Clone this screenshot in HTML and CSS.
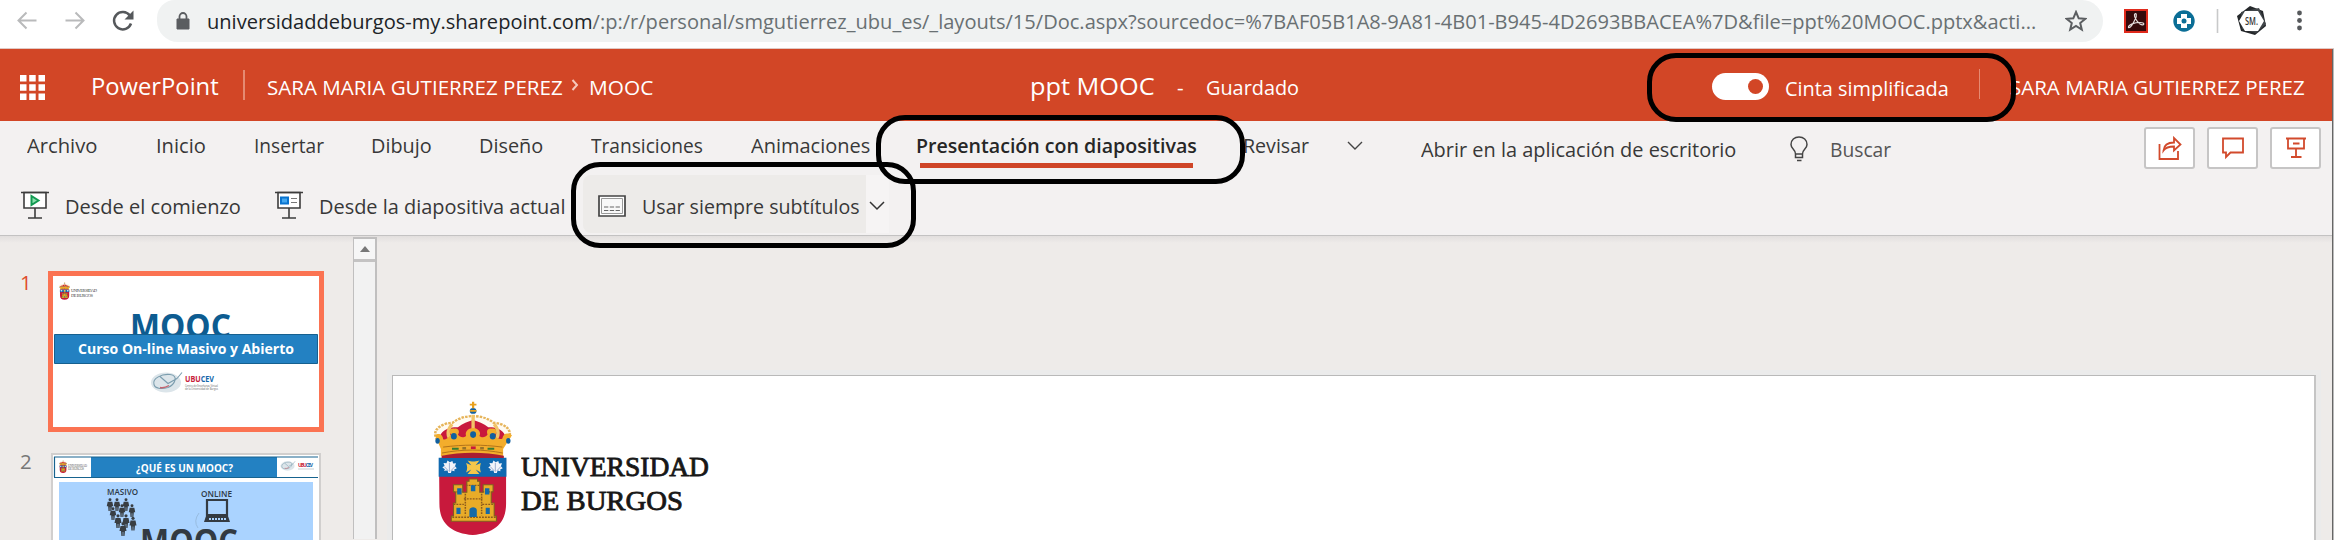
FILE: index.html
```html
<!DOCTYPE html>
<html lang="es">
<head>
<meta charset="utf-8">
<title>ppt MOOC - PowerPoint</title>
<link rel="stylesheet" href="styles.css">
</head>
<body>
<svg class="defs" width="0" height="0">
  <symbol id="crest" viewBox="22 18 216 410" preserveAspectRatio="none">
    <path d="M41 195H222V330C222 390 190 420 132 425C74 420 42 390 42 330Z" fill="#c8193c"/>
    <path d="M40 190H223V248H40Z" fill="#1069b0"/>
    <path d="M50 150C10 118 38 86 78 84C96 68 116 64 133 64C150 64 170 68 188 84C226 86 252 118 212 150Z" fill="#fffaf0" stroke="#e6b45a" stroke-width="7" stroke-dasharray="7 3"/>
    <path d="M45 150C34 118 58 96 92 98C104 86 120 80 133 76C146 80 162 86 174 98C206 96 230 118 218 150Z" fill="#c8193c"/>
    <path d="M133 60V140M76 88C62 108 62 125 76 140M190 88C204 108 204 125 190 140" fill="none" stroke="#f2c468" stroke-width="9"/>
    <g fill="#f3ad2c"><path d="M30 122C42 112 52 122 52 134C62 138 68 126 74 120C64 112 70 100 82 102C94 100 98 112 92 120C98 130 108 130 114 124C110 112 120 100 133 100C146 100 156 112 150 124C156 130 166 130 172 120C168 108 172 100 184 102C196 100 200 114 190 122C196 132 206 136 212 132C214 116 226 112 238 122L214 164V186C160 176 104 176 46 186V164Z"/></g>
    <path d="M48 184C100 172 164 172 216 184V191H48Z" fill="#a91d32"/>
    <path d="M52 158C108 150 158 150 212 158M49 176C104 164 160 164 213 176" fill="none" stroke="#a96b16" stroke-width="2.5"/>
    <g fill="#12609f"><ellipse cx="37" cy="139" rx="6" ry="9"/><ellipse cx="81" cy="125" rx="8" ry="10"/><ellipse cx="133" cy="120" rx="8" ry="10"/><ellipse cx="186" cy="125" rx="8" ry="10"/><ellipse cx="228" cy="139" rx="6" ry="9"/><circle cx="133" cy="48" r="9"/></g>
    <path d="M133 20V40M124 29H142M125 48H142" stroke="#e9a11d" stroke-width="6"/>
    <g fill="#347b35"><path d="M76 160h18v6h-18zM172 160h18v6h-18z"/></g><path d="M127 156h13v8h-13z" fill="#c8193c"/><path d="M104 158h10v7h-10zM152 158h10v7h-10z" fill="#98742a"/>
    <path d="M118 199C130 203 136 203 150 199L140 213L154 206C151 217 151 224 154 235L140 226L150 240H118L128 226L114 235C118 224 118 217 114 206L128 213Z" fill="#f4c74a"/>
    <g fill="#f3f4fa"><path id="shell" d="M66 237L64 229L54 230L57 225L50 220L56 215L53 206L61 207L64 199L70 204L77 200L79 208L87 207L84 216L89 222L82 226L83 231L75 229L73 237Z"/><use href="#shell" x="124"/></g>
    <path d="M69 233V206M66 230L55 217M73 230L84 217M193 233V206M190 230L179 217M197 230L208 217" stroke="#7992bf" stroke-width="2"/>
    <path d="M80 272H105V295H116V262H122V255H145V262H151V295H160V272H187V294H182V328H190V367H196V383H74V367H80V328H86V294H80Z" fill="#e8ac28" stroke="#805d21" stroke-width="3"/>
    <path d="M80 294H108M158 294H187M113 274H153M108 315H158M80 332H108M158 332H190M77 371H194M112 300V365M156 300V365" stroke="#8c5a1c" stroke-width="4" stroke-dasharray="5 3"/>
    <g fill="#156aa8"><path d="M90 283h12v19h-12zM127 274h12v18h-12zM165 283h12v19h-12zM88 342h11v19h-11zM167 342h11v19h-11zM123 370V350C123 338 143 338 143 350V370z"/></g>
  </symbol>
  <symbol id="mouse" viewBox="0 0 36 24">
    <ellipse cx="16" cy="12" rx="15" ry="10" fill="#dce5ea"/>
    <path d="M4 14C2 8 12 3 20 4C29 5 25 14 18 17C11 19 5 18 4 14ZM10 6L18 13L27 8M27 8L32 2" fill="none" stroke="#7b9dae" stroke-width="1.1"/><path d="M10 17Q14 18 19 15" fill="none" stroke="#c56570" stroke-width="1.3"/>
  </symbol>
  <symbol id="person" viewBox="0 0 8 14"><circle cx="4" cy="1.8" r="1.6"/><path d="M1.5 4H6.5L7.5 9H6L5.5 14H4.3V10H3.7V14H2.4L2 9H.5Z"/></symbol>
</svg>

<div class="browser">
  <div class="nav">
    <svg viewBox="0 0 157 48" width="157" height="48" fill="none" stroke-width="2">
      <g stroke="#b9babb"><path d="M36.500 20.500H18.500M26.500 12.500L18.500 20.500L26.500 28.500"/><path d="M65.500 20.500H83.500M75.500 12.500L83.500 20.500L75.500 28.500"/></g>
      <path d="M129.800 15.500A8.700 8.700 0 1 0 131 23.500" stroke="#55585b" stroke-width="2.500"/><path d="M133.500 10.500V19.500H124.500Z" fill="#55585b"/>
    </svg>
  </div>
  <div class="address">
    <svg class="lock" viewBox="0 0 14 18" width="14" height="18"><path d="M1 7H13V17H1Z" fill="#5a5d60" stroke="#5a5d60" stroke-linejoin="round"/><path d="M3.500 7V4.500A3.500 3.500 0 0 1 10.500 4.500V7" fill="none" stroke="#5a5d60" stroke-width="1.800"/></svg>
    <span class="fit url"><span><b>universidaddeburgos-my.sharepoint.com</b>/:p:/r/personal/smgutierrez_ubu_es/_layouts/15/Doc.aspx?sourcedoc=%7BAF05B1A8-9A81-4B01-B945-4D2693BBACEA%7D&amp;file=ppt%20MOOC.pptx&amp;acti...</span></span>
    <svg class="star" viewBox="0 0 22 22" width="22" height="22"><path d="M11 2L13.700 8.300L20.300 8.800L15.200 13L16.800 19.600L11 16L5.200 19.600L6.800 13L1.700 8.800L8.300 8.300Z" fill="none" stroke="#5b5e61" stroke-width="2"/></svg>
  </div>
  <div class="extensions">
    <svg viewBox="0 0 220 44" width="220" height="44">
      <path d="M15 10H37V32H15Z" fill="#35090b" stroke="#e02a1c" stroke-width="2"/>
      <path d="M18.500 27.500C18 24.500 25 22.500 30 22.500C36 22.500 34 26.500 30 24C26 21 24 16 24.500 14.500C26 12 27.500 15 25 19.500C23 24 20 28.500 18.500 27.500Z" fill="none" stroke="#e6dddd" stroke-width="1.200"/>
      <circle cx="74" cy="21" r="10.700" fill="#0b6e96"/><path d="M71 14H77V18H81V24H77V28H71V24H67V18H71Z" fill="#fff"/><circle cx="74" cy="21" r="2.500" fill="#0b6e96"/>
      <path d="M107.500 9V33" stroke="#c8c9ca" stroke-width="1.600"/>
      <path d="M140 6L153 11L156 26L145 35L131 31L127 16Z" fill="#25282b"/><path d="M131 12L149 8L156 24L146 33L132 29Z" fill="#41464a"/><path d="M135 11H148L154 21L148 31H135L129 21Z" fill="#fff"/>
      <text x="135" y="25" class="avatar" textLength="13" lengthAdjust="spacingAndGlyphs">SM.</text>
      <g fill="#56595c"><circle cx="189.500" cy="13" r="2.400"/><circle cx="189.500" cy="20.500" r="2.400"/><circle cx="189.500" cy="28" r="2.400"/></g>
    </svg>
  </div>
</div>

<header class="suite">
  <svg class="waffle" viewBox="0 0 25 25" width="25" height="25" fill="#fff"><path d="M0 0H6.500V6.500H0ZM9.200 0H15.700V6.500H9.200ZM18.500 0H25V6.500H18.500ZM0 9.200H6.500V15.700H0ZM9.200 9.200H15.700V15.700H9.200ZM18.500 9.200H25V15.700H18.500ZM0 18.500H6.500V25H0ZM9.200 18.500H15.700V25H9.200ZM18.500 18.500H25V25H18.500Z"/></svg>
  <span class="fit app"><span>PowerPoint</span></span>
  <i class="rule"></i>
  <span class="fit owner"><span>SARA MARIA GUTIERREZ PEREZ</span></span>
  <svg class="crumb" viewBox="0 0 8 12" width="8" height="12"><path d="M1.500 1L6 6L1.500 11" fill="none" stroke="#f6c9bc" stroke-width="2"/></svg>
  <span class="fit folder"><span>MOOC</span></span>
  <span class="fit doc"><span>ppt MOOC</span></span>
  <span class="fit dash"><span>-</span></span>
  <span class="fit saved"><span>Guardado</span></span>
  <span class="toggle"><i></i></span>
  <span class="fit simple"><span>Cinta simplificada</span></span>
  <i class="rule thin"></i>
  <span class="fit user"><span>SARA MARIA GUTIERREZ PEREZ</span></span>
</header>

<section class="ribbon">
  <nav class="tabs">
    <span class="fit t1"><span>Archivo</span></span>
    <span class="fit t2"><span>Inicio</span></span>
    <span class="fit t3"><span>Insertar</span></span>
    <span class="fit t4"><span>Dibujo</span></span>
    <span class="fit t5"><span>Diseño</span></span>
    <span class="fit t6"><span>Transiciones</span></span>
    <span class="fit t7"><span>Animaciones</span></span>
    <span class="fit t8"><span>Presentación con diapositivas</span></span>
    <span class="fit t9"><span>Revisar</span></span>
    <svg class="more" viewBox="0 0 16 10" width="16" height="10"><path d="M1 1L8 8L15 1" fill="none" stroke="#444" stroke-width="1.400"/></svg>
    <span class="fit open"><span>Abrir en la aplicación de escritorio</span></span>
    <svg class="bulb" viewBox="0 0 18 26" width="18" height="26" fill="none" stroke="#444" stroke-width="1.500"><path d="M5.500 18C5.500 13 1 13 1 8.500C1 4 4.500 1 9 1S17 4 17 8.500C17 13 12.500 13 12.500 18ZM5.500 18V21.500H12.500V18M7 24.500H11.500"/></svg>
    <span class="fit search"><span>Buscar</span></span>
    <span class="actions">
      <span class="action"><svg viewBox="0 0 24 24" width="24" height="24"><path d="M1.500 8V23H20V15M5.500 14.500C6 9 10 6.500 16 6.500V2L22.500 8.500L16 14.500V10.500C11 10.500 8 11 5.500 14.500Z"/></svg></span>
      <span class="action"><svg viewBox="0 0 24 24" width="24" height="24"><path d="M2 2.500H22V16.500H9.500L5 21V16.500H2Z"/></svg></span>
      <span class="action"><svg viewBox="0 0 24 24" width="24" height="24"><path d="M2 2.500H22M4 2.500V12.500H20V2.500M9 7.500H15.500M12 12.500V21M7 21H17.500"/></svg></span>
    </span>
  </nav>
  <div class="commands">
    <svg class="play" viewBox="0 0 30 28" width="30" height="28" fill="none" stroke="#3c3c3c" stroke-width="1.600"><path d="M4 1.500H26V17H4Z" fill="#fff"/><path d="M1 1.500H29M15 17V27M8 27H22"/><path d="M11.500 5V14L18.500 9.500Z" fill="#8de0ae" stroke="#129a52" stroke-width="2"/></svg>
    <span class="fit c1"><span>Desde el comienzo</span></span>
    <svg class="current" viewBox="0 0 30 28" width="30" height="28" fill="none" stroke="#3c3c3c" stroke-width="1.600"><path d="M4 1.500H26V17H4Z" fill="#fff"/><path d="M1 1.500H29M15 17V27M8 27H22"/><path d="M7 6.500H14V12.500H7Z" fill="#43a7ef" stroke="#0873cf" stroke-width="2"/><path d="M17 7.500H23M17 11.500H23" stroke="#777" stroke-width="1.200"/></svg>
    <span class="fit c2"><span>Desde la diapositiva actual</span></span>
    <span class="captions">
      <svg viewBox="0 0 28 22" width="28" height="22"><path d="M1 1H27V21H1Z" fill="#fff" stroke="#444" stroke-width="1.700"/><path d="M3.500 3.500H24.500V18.500H3.500Z" fill="#f8f8f8" stroke="#999"/><path d="M6 12H22M6 15.500H22" stroke="#666" stroke-width="1.200" stroke-dasharray="4.300 1.500"/></svg>
      <span class="fit c3"><span>Usar siempre subtítulos</span></span>
    </span>
    <span class="split"><svg viewBox="0 0 16 10" width="16" height="10"><path d="M1 1L8 8L15 1" fill="none" stroke="#333" stroke-width="1.500"/></svg></span>
  </div>
</section>

<main class="workspace">
  <aside class="slides">
    <div class="row first"><span class="num">1</span>
      <svg class="thumb active" viewBox="0 0 266 151" width="266" height="151">
        <rect width="266" height="151" fill="#fff"/>
        <use href="#crest" x="6" y="6" width="11" height="18"/>
        <text x="18" y="16" class="tiny serif" textLength="26">UNIVERSIDAD</text><text x="18" y="20.500" class="tiny serif" textLength="22">DE BURGOS</text>
        <text x="77" y="61.500" class="mooc" textLength="101" lengthAdjust="spacingAndGlyphs">MOOC</text>
        <path d="M1.500 58.500H264.500V87.500H1.500Z" fill="#2381c2" stroke="#16608f"/>
        <text x="25" y="78" class="course" textLength="216" lengthAdjust="spacingAndGlyphs">Curso On-line Masivo y Abierto</text>
        <use href="#mouse" x="97" y="94" width="36" height="25"/>
        <text x="132" y="106" class="ubu" textLength="29" lengthAdjust="spacingAndGlyphs"><tspan fill="#c8203b">UBU</tspan><tspan fill="#1467aa">CEV</tspan></text>
        <text x="132" y="110.500" class="micro" textLength="33" lengthAdjust="spacingAndGlyphs">Centro de Enseñanza Virtual</text><text x="132" y="114" class="micro" textLength="33" lengthAdjust="spacingAndGlyphs">de la Universidad de Burgos</text>
      </svg>
    </div>
    <div class="row"><span class="num">2</span>
      <svg class="thumb" viewBox="0 0 266 87" width="266" height="87">
        <rect width="266" height="87" fill="#fff"/>
        <path d="M38 2H224V22H38Z" fill="#2381c2"/><path d="M1 2H265M1 22.500H265M1.500 2V22" stroke="#17638f" stroke-width="1.200"/>
        <use href="#crest" x="6" y="5" width="8" height="13"/>
        <text x="15" y="11.500" class="micro serif" textLength="19">UNIVERSIDAD</text><text x="15" y="15" class="micro serif" textLength="16">DE BURGOS</text>
        <text x="83" y="17" class="question" textLength="97" lengthAdjust="spacingAndGlyphs">¿QUÉ ES UN MOOC?</text>
        <use href="#mouse" x="227" y="5" width="17" height="12"/><text x="245" y="11.500" class="micro ubus" textLength="15"><tspan fill="#c8203b">UBU</tspan><tspan fill="#1467aa">CEV</tspan></text>
        <path d="M245 14H261" stroke="#c9cfd3" stroke-width="1"/>
        <path d="M6 27H260V87H6Z" fill="#aad3ff"/>
        <text x="54" y="40" class="label" textLength="31" lengthAdjust="spacingAndGlyphs">MASIVO</text><text x="148" y="41.500" class="label" textLength="31" lengthAdjust="spacingAndGlyphs">ONLINE</text>
        <g fill="#393e43"><use href="#person" x="53" y="43" width="8" height="13"/><use href="#person" x="60" y="43" width="8" height="13"/><use href="#person" x="69" y="43" width="8" height="13"/><use href="#person" x="75" y="49" width="8" height="13"/><use href="#person" x="65" y="49" width="8" height="13"/><use href="#person" x="56" y="52" width="8" height="13"/><use href="#person" x="61" y="59" width="8" height="14"/><use href="#person" x="69" y="59" width="8" height="14"/><use href="#person" x="76" y="61" width="8" height="15"/><use href="#person" x="66" y="67" width="8" height="14"/></g>
        <path d="M154 45H174V60H154Z" fill="none" stroke="#343b42" stroke-width="2.200"/><path d="M153 61H175L177 67H151Z" fill="#343b42"/><path d="M156 64H173" stroke="#aad3ff" stroke-width="2" stroke-dasharray="2 1"/>
        <path d="M146 58Q140 66 145 73" fill="none" stroke="#98bce0"/>
        <text x="87" y="98" class="big" textLength="98" lengthAdjust="spacingAndGlyphs">MOOC</text>
      </svg>
    </div>
  </aside>
  <div class="scroll"><span><svg viewBox="0 0 10 6" width="10" height="6"><path d="M0 6L5 0L10 6Z" fill="#777"/></svg></span></div>
  <div class="canvas">
    <article class="slide">
      <svg class="shield" width="80" height="135"><use href="#crest" width="80" height="135"/></svg>
      <svg class="university" viewBox="0 0 200 70" width="200" height="70"><text x="0" y="23" textLength="188" lengthAdjust="spacingAndGlyphs">UNIVERSIDAD</text><text x="0" y="57" textLength="162" lengthAdjust="spacingAndGlyphs">DE BURGOS</text></svg>
    </article>
  </div>
</main>
<i class="edge"></i>
<i class="mark mark-tab"></i><i class="mark mark-captions"></i><i class="mark mark-toggle"></i>
<script src="fit.js"></script>
</body>
</html>
```
FILE: styles.css
```css
* { box-sizing: border-box; }
body { margin: 0; width: 2334px; height: 540px; overflow: hidden; position: relative; background: #eeebe9; font-family: "Open Sans", "Noto Sans", sans-serif; }
svg { display: block; flex: none; }
.defs { position: absolute; }
.fit { display: block; flex: none; white-space: nowrap; line-height: 30px; height: 30px; }
.fit > span { display: inline-block; transform-origin: 0 50%; }

.browser { display: flex; height: 49px; background: #fff; border-bottom: 1px solid #e0c9c5; }
.nav { width: 157px; }
.address { width: 1946px; height: 42px; display: flex; align-items: flex-start; background: #f0f2f2; border-radius: 18px 21px 21px 21px; padding-left: 19px; }
.lock { margin-top: 12px; margin-right: 17px; }
.url { width: 1829px; font-size: 20.5px; color: #697073; margin-top: 6px; }
.url b { font-weight: 400; color: #202427; }
.star { margin: 10px 0 0 29px; }
.extensions { margin-left: 7px; }
.avatar { font: 600 11px "Open Sans", sans-serif; fill: #333; }

.suite { display: flex; height: 72px; background: #d24626; color: #fff; align-items: flex-start; font-size: 20.5px; }
.suite .fit { margin-top: 23px; }
.waffle { margin: 26px 0 0 20px; }
.suite .app { width: 128px; margin-left: 46px; margin-top: 22px; font-size: 24.5px; }
.rule { width: 2px; height: 30px; margin: 21px 0 0 24px; background: #e58a72; flex: none; }
.owner { width: 296px; margin-left: 22px; }
.crumb { margin: 30px 0 0 8px; }
.folder { width: 64px; margin-left: 10px; }
.suite .doc { width: 125px; margin-left: 377px; margin-top: 22px; font-size: 24.5px; }
.dash { width: 7px; margin-left: 22px; }
.saved { width: 93px; margin-left: 22px; }
.toggle { width: 57px; height: 27px; flex: none; border-radius: 14px; background: #fff; margin: 24px 0 0 413px; padding: 6px 6px; display: flex; justify-content: flex-end; }
.toggle i { width: 15px; height: 15px; border-radius: 50%; background: #d24626; }
.suite .simple { width: 164px; margin-left: 16px; margin-top: 24px; }
.rule.thin { width: 1px; margin-left: 30px; margin-top: 20px; }
.user { width: 295px; margin-left: 30px; }

.ribbon { height: 115px; background: #f3f1f1; border-bottom: 1px solid #c3c2c2; color: #383838; font-size: 20.5px; }
.tabs { display: flex; height: 54px; align-items: flex-start; }
.tabs .fit { margin-top: 9px; }
.tabs .t1 { width: 70px; margin-left: 27px; }
.tabs .t2 { width: 50px; margin-left: 59px; }
.tabs .t3 { width: 70px; margin-left: 48px; }
.tabs .t4 { width: 61px; margin-left: 47px; }
.tabs .t5 { width: 64px; margin-left: 47px; }
.tabs .t6 { width: 112px; margin-left: 48px; }
.tabs .t7 { width: 119px; margin-left: 48px; }
.tabs .t8 { width: 281px; height: 38px; margin-left: 46px; font-weight: 600; color: #262626; background: linear-gradient(#cf4527, #cf4527) 4px 100% / 273px 5px no-repeat; }
.tabs .t9 { width: 66px; margin-left: 46px; }
.more { margin: 20px 0 0 38px; }
.tabs .open { width: 315px; margin-left: 58px; margin-top: 13px; }
.bulb { margin: 15px 0 0 54px; }
.tabs .search { width: 61px; margin-left: 22px; margin-top: 13px; color: #555; }
.actions { display: flex; gap: 12px; margin: 6px 0 0 253px; }
.action { width: 51px; height: 42px; border: 2px solid #c6c5c5; border-radius: 3px; background: #fff; display: flex; align-items: center; justify-content: center; }
.action path { fill: none; stroke: #d24a2c; stroke-width: 1.8; }
.commands { display: flex; align-items: flex-start; height: 60px; }
.commands .fit { margin-top: 16px; }
.play { margin: 16px 0 0 20px; }
.c1 { width: 176px; margin-left: 15px; }
.current { margin: 16px 0 0 33px; }
.c2 { width: 246px; margin-left: 15px; }
.captions { display: flex; width: 283px; height: 58px; margin-left: 18px; padding-left: 16px; background: #edebe9; border-radius: 8px 0 0 8px; }
.commands .captions svg { margin-top: 20px; margin-left: -1px; }
.c3 { width: 218px; margin-left: 16px; }
.split { width: 23px; height: 58px; background: #f6f4f4; padding: 26px 0 0 3px; }

.workspace { display: flex; height: 304px; background: linear-gradient(#e2dfde, #eeebe9 7px); }
.slides { width: 353px; padding-top: 35px; overflow: hidden; }
.row { display: flex; align-items: flex-start; height: 182px; }
.num { width: 31px; margin-right: 17px; padding-left: 20px; font-size: 20.5px; line-height: 26px; color: #777; margin-top: -2px; }
.row:not(.first) .num { margin-top: -5px; }
.first .num { color: #df4b2c; }
.thumb { border: 2px solid #d1cfce; width: 270px; height: 91px; margin-left: 3px; }
.thumb.active { border: 5px solid #fb7352; width: 276px; height: 161px; margin-left: 0; }
.serif { font-family: "Liberation Serif", serif; }
.tiny { font-size: 4.5px; fill: #444; }
.micro { font-size: 3.2px; fill: #666; }
.mooc { font-weight: 700; font-size: 34px; fill: #0d5c91; }
.course { font-weight: 700; font-size: 15px; fill: #fff; }
.ubu { font-weight: 700; font-size: 8.5px; }
.ubus { font-weight: 700; font-size: 5px; }
.question { font-weight: 700; font-size: 11px; fill: #fff; }
.label { font-weight: 600; font-size: 8.5px; fill: #2d3946; }
.big { font-weight: 700; font-size: 34px; fill: #323a42; }
.scroll { width: 24px; height: 302px; margin-top: 1px; border: solid #c0bfbf; border-width: 2px 2px 0 1px; background: #f2f2f2; }
.scroll span { display: flex; height: 23px; align-items: center; justify-content: center; border-bottom: 3px solid #c4c3c3; background: #f6f6f6; }
.canvas { width: 1957px; padding: 139px 0 0 15px; }
.slide { width: 1924px; height: 170px; display: flex; background: #fff; border: 1px solid #b9b9b9; border-right: 2px solid #c5c5c5; box-shadow: 0 0 0 5px #ebebeb; }
.shield { margin: 25px 0 0 39px; }
.university { margin: 77px 0 0 9px; }
.university text { font: 400 27px "Liberation Serif", serif; fill: #171717; stroke: #171717; stroke-width: 0.8px; }

.edge { position: absolute; top: 49px; right: 0; width: 2px; height: 491px; background: #bbb; border-left: 1px solid #666; }
.mark { position: absolute; border: 5px solid #000; border-radius: 29px; }
.mark-tab { left: 876px; top: 115px; width: 369px; height: 69px; }
.mark-captions { left: 571px; top: 162px; width: 345px; height: 86px; }
.mark-toggle { left: 1647px; top: 53px; width: 369px; height: 69px; }
```
FILE: fit.js
```js
// Scales each label so that it fills the width of its slot.
document.querySelectorAll('.fit').forEach(function (slot) {
  var label = slot.firstElementChild;
  label.style.transform = 'scaleX(' + slot.clientWidth / label.offsetWidth + ')';
});
```
